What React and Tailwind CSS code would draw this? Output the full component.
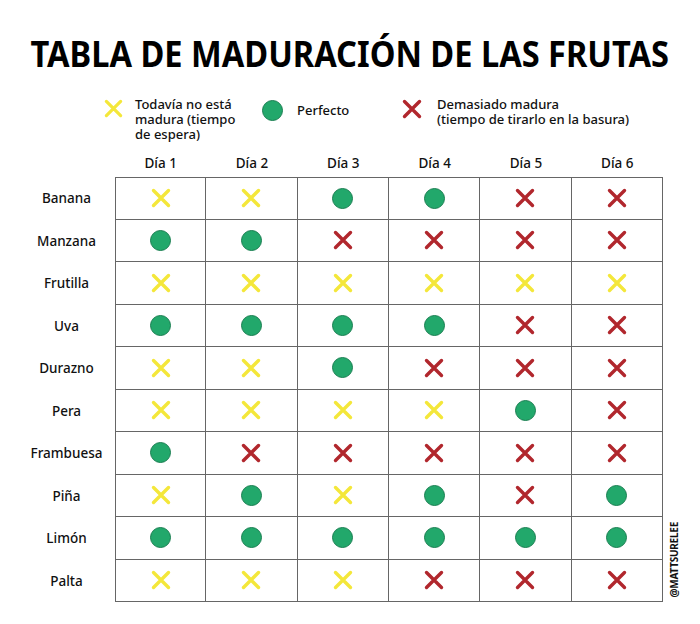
import React from 'react';

const days = ['Día 1', 'Día 2', 'Día 3', 'Día 4', 'Día 5', 'Día 6'];

// Y = todavía no, G = perfecto, R = demasiado madura
const fruits = [
  { name: 'Banana', marks: 'YYGGRR' },
  { name: 'Manzana', marks: 'GGRRRR' },
  { name: 'Frutilla', marks: 'YYYYYY' },
  { name: 'Uva', marks: 'GGGGRR' },
  { name: 'Durazno', marks: 'YYGRRR' },
  { name: 'Pera', marks: 'YYYYGR' },
  { name: 'Frambuesa', marks: 'GRRRRR' },
  { name: 'Piña', marks: 'YGYGRG' },
  { name: 'Limón', marks: 'GGGGGG' },
  { name: 'Palta', marks: 'YYYRRR' },
];

const Cross = ({ color, size = 20 }) => (
  <svg width={size} height={size} viewBox="0 0 20 20">
    <path d="M2.5 2.5 L17.5 17.5 M17.5 2.5 L2.5 17.5" stroke={color} strokeWidth="3.4" strokeLinecap="round" fill="none" />
  </svg>
);

const Dot = () => (
  <div className="w-[21px] h-[21px] rounded-full bg-[#22a86b] border border-[#1b7f52]" />
);

const Mark = ({ type }) => {
  if (type === 'G') return <Dot />;
  if (type === 'R') return <Cross color="#b1272d" />;
  return <Cross color="#f4e73a" />;
};

export default function App() {
  return (
    <div className="w-[700px] h-[624px] bg-white text-[#111] overflow-hidden" style={{ fontFamily: '"Noto Sans", "Open Sans", sans-serif' }}>
      {/* Title */}
      <div className="pt-[36px] flex justify-center">
        <h1 className="text-[36px] leading-[36px] font-bold text-black scale-x-[0.905] whitespace-nowrap">
          TABLA DE MADURACIÓN DE LAS FRUTAS
        </h1>
      </div>

      {/* Legend */}
      <div className="flex items-start pl-[104px] mt-[25px] text-[13px] leading-[15px] font-medium">
        <div className="flex items-start w-[158px]">
          <div className="mt-[2px]"><Cross color="#f4e73a" size={19} /></div>
          <p className="ml-[12px]">Todavía no está<br />madura (tiempo<br />de espera)</p>
        </div>
        <div className="flex items-center w-[140px] mt-[3px]">
          <Dot />
          <p className="ml-[14px]">Perfecto</p>
        </div>
        <div className="flex items-start">
          <div className="mt-[2px]"><Cross color="#b1272d" size={20} /></div>
          <p className="ml-[15px]">Demasiado madura<br />(tiempo de tirarlo en la basura)</p>
        </div>
      </div>

      {/* Table */}
      <div className="relative mt-[8px] text-[13.5px] font-medium">
        <div className="grid grid-cols-[115px_repeat(6,91.33px)] h-[27px] items-center">
          <div />
          {days.map((d) => (
            <div key={d} className="text-center">{d}</div>
          ))}
        </div>
        {fruits.map((f, r) => (
          <div key={f.name} className="grid grid-cols-[115px_repeat(6,91.33px)] h-[42.5px]">
            <div className="flex items-center justify-center pl-[18px]">{f.name}</div>
            {f.marks.split('').map((m, c) => (
              <div
                key={c}
                className={`flex items-center justify-center border-r border-b border-[#666] ${c === 0 ? 'border-l' : ''} ${r === 0 ? 'border-t' : ''}`}
              >
                <Mark type={m} />
              </div>
            ))}
          </div>
        ))}
        <div className="absolute right-[21px] bottom-[5px] text-[10px] font-bold leading-none tracking-tight [writing-mode:vertical-rl] rotate-180">
          @MATTSURELEE
        </div>
      </div>
    </div>
  );
}
